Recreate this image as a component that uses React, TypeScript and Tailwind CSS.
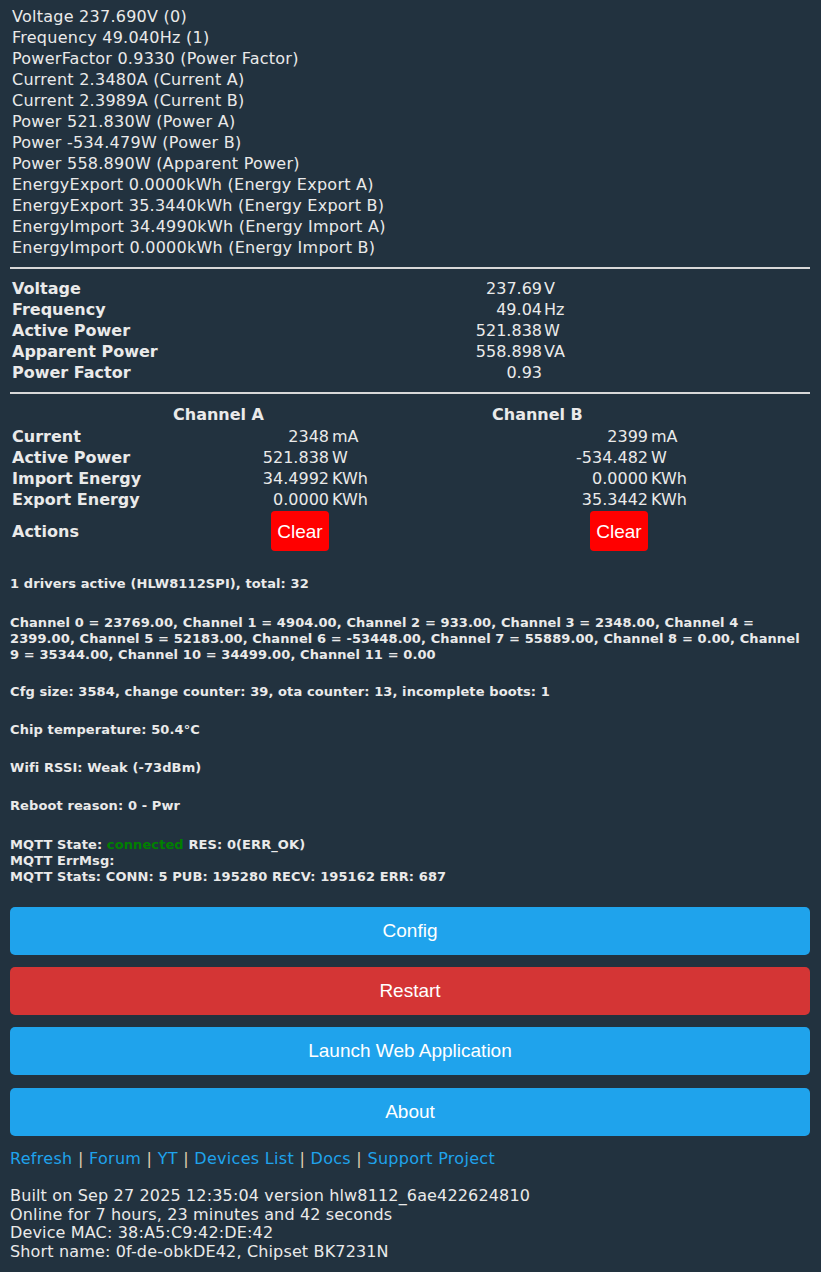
const lines = [
  "Voltage 237.690V (0)",
  "Frequency 49.040Hz (1)",
  "PowerFactor 0.9330 (Power Factor)",
  "Current 2.3480A (Current A)",
  "Current 2.3989A (Current B)",
  "Power 521.830W (Power A)",
  "Power -534.479W (Power B)",
  "Power 558.890W (Apparent Power)",
  "EnergyExport 0.0000kWh (Energy Export A)",
  "EnergyExport 35.3440kWh (Energy Export B)",
  "EnergyImport 34.4990kWh (Energy Import A)",
  "EnergyImport 0.0000kWh (Energy Import B)",
];

const summary = [
  ["Voltage", "237.69", "V"],
  ["Frequency", "49.04", "Hz"],
  ["Active Power", "521.838", "W"],
  ["Apparent Power", "558.898", "VA"],
  ["Power Factor", "0.93", ""],
];

const channels = [
  ["Current", "2348", "mA", "2399", "mA"],
  ["Active Power", "521.838", "W", "-534.482", "W"],
  ["Import Energy", "34.4992", "KWh", "0.0000", "KWh"],
  ["Export Energy", "0.0000", "KWh", "35.3442", "KWh"],
];

const links = ["Refresh", "Forum", "YT", "Devices List", "Docs", "Support Project"];

function ClearBtn() {
  return (
    <button
      type="button"
      className="w-[58px] h-[40px] my-[1px] rounded-[4px] bg-[#ff0000] text-white text-[19px] font-['Liberation_Sans',Arial,sans-serif]"
    >
      Clear
    </button>
  );
}

function BigBtn({ label, red }: { label: string; red?: boolean }) {
  return (
    <button
      type="button"
      className={
        "w-full h-[48px] rounded-[5px] text-white text-[19px] font-['Liberation_Sans',Arial,sans-serif] " +
        (red ? "bg-[#d43535]" : "bg-[#1fa3ec]")
      }
    >
      {label}
    </button>
  );
}

export default function App() {
  return (
    <div className="min-h-screen bg-[#22323f] text-[#eaeaea] font-['DejaVu_Sans',Verdana,sans-serif] text-[16px]">
      <div className="w-[800px] ml-[10px] pt-[6px] pb-[11px]">
        {/* sensor readout */}
        <div className="pl-[2px] leading-[21px] tracking-[0.25px]">
          {lines.map((l) => (
            <div key={l}>{l}</div>
          ))}
        </div>

        <div className="mt-[9px] h-[2px] bg-[#d8d8d8]" />

        <div className="mt-[9px] grid grid-cols-[342px_190px_1fr] leading-[21px]">
          {summary.map(([k, v, u]) => (
            <div key={k} className="contents">
              <div className="pl-[2px] font-bold">{k}</div>
              <div className="text-right">{v}</div>
              <div className="pl-[2px]">{u}</div>
            </div>
          ))}
        </div>

        <div className="mt-[9px] h-[2px] bg-[#d8d8d8]" />

        {/* channels */}
        <div className="mt-[10px] mb-[1px] flex leading-[21px] font-bold">
          <div className="ml-[163px] w-[319px]">Channel A</div>
          <div>Channel B</div>
        </div>
        <div className="grid grid-cols-[159px_160px_159px_160px_1fr] leading-[21px]">
          {channels.map(([k, a, ua, b, ub]) => (
            <div key={k} className="contents">
              <div className="pl-[2px] font-bold">{k}</div>
              <div className="text-right">{a}</div>
              <div className="pl-[3px]">{ua}</div>
              <div className="text-right">{b}</div>
              <div className="pl-[3px]">{ub}</div>
            </div>
          ))}
          <div className="pl-[2px] font-bold flex items-center">Actions</div>
          <div className="flex justify-end">
            <ClearBtn />
          </div>
          <div />
          <div className="flex justify-end">
            <ClearBtn />
          </div>
          <div />
        </div>

        {/* status */}
        <div className="text-[13px] font-bold leading-[16px] tracking-[0.1px]">
          <div className="mt-[24px]">1 drivers active (HLW8112SPI), total: 32</div>
          <div className="mt-[23px]">
            Channel 0 = 23769.00, Channel 1 = 4904.00, Channel 2 = 933.00, Channel 3 = 2348.00, Channel 4 =
            2399.00, Channel 5 = 52183.00, Channel 6 = -53448.00, Channel 7 = 55889.00, Channel 8 = 0.00, Channel
            9 = 35344.00, Channel 10 = 34499.00, Channel 11 = 0.00
          </div>
          <div className="mt-[21px]">
            Cfg size: 3584, change counter: 39, ota counter: 13, incomplete boots: 1
          </div>
          <div className="mt-[22px]">Chip temperature: 50.4°C</div>
          <div className="mt-[22px]">Wifi RSSI: Weak (-73dBm)</div>
          <div className="mt-[22px]">Reboot reason: 0 - Pwr</div>
          <div className="mt-[23px]">
            MQTT State: <span className="text-[#008000]">connected</span> RES: 0(ERR_OK)
          </div>
          <div>MQTT ErrMsg:</div>
          <div>MQTT Stats: CONN: 5 PUB: 195280 RECV: 195162 ERR: 687</div>
        </div>

        <div className="mt-[22px] flex flex-col">
          <BigBtn label="Config" />
          <div className="mt-[12px]">
            <BigBtn label="Restart" red />
          </div>
          <div className="mt-[12px]">
            <BigBtn label="Launch Web Application" />
          </div>
          <div className="mt-[13px]">
            <BigBtn label="About" />
          </div>
        </div>

        <div className="mt-[12px] leading-[21px] tracking-[0.3px]">
          {links.map((l, i) => (
            <span key={l}>
              {i > 0 && <span className="text-[#e0cfb1]"> | </span>}
              <a href="#" className="text-[#1fa3ec]">
                {l}
              </a>
            </span>
          ))}
        </div>

        <div className="mt-[18px] leading-[18.5px] tracking-[0.15px]">
          <div>Built on Sep 27 2025 12:35:04 version hlw8112_6ae422624810</div>
          <div>Online for 7 hours, 23 minutes and 42 seconds</div>
          <div>Device MAC: 38:A5:C9:42:DE:42</div>
          <div>Short name: 0f-de-obkDE42, Chipset BK7231N</div>
        </div>
      </div>
    </div>
  );
}
